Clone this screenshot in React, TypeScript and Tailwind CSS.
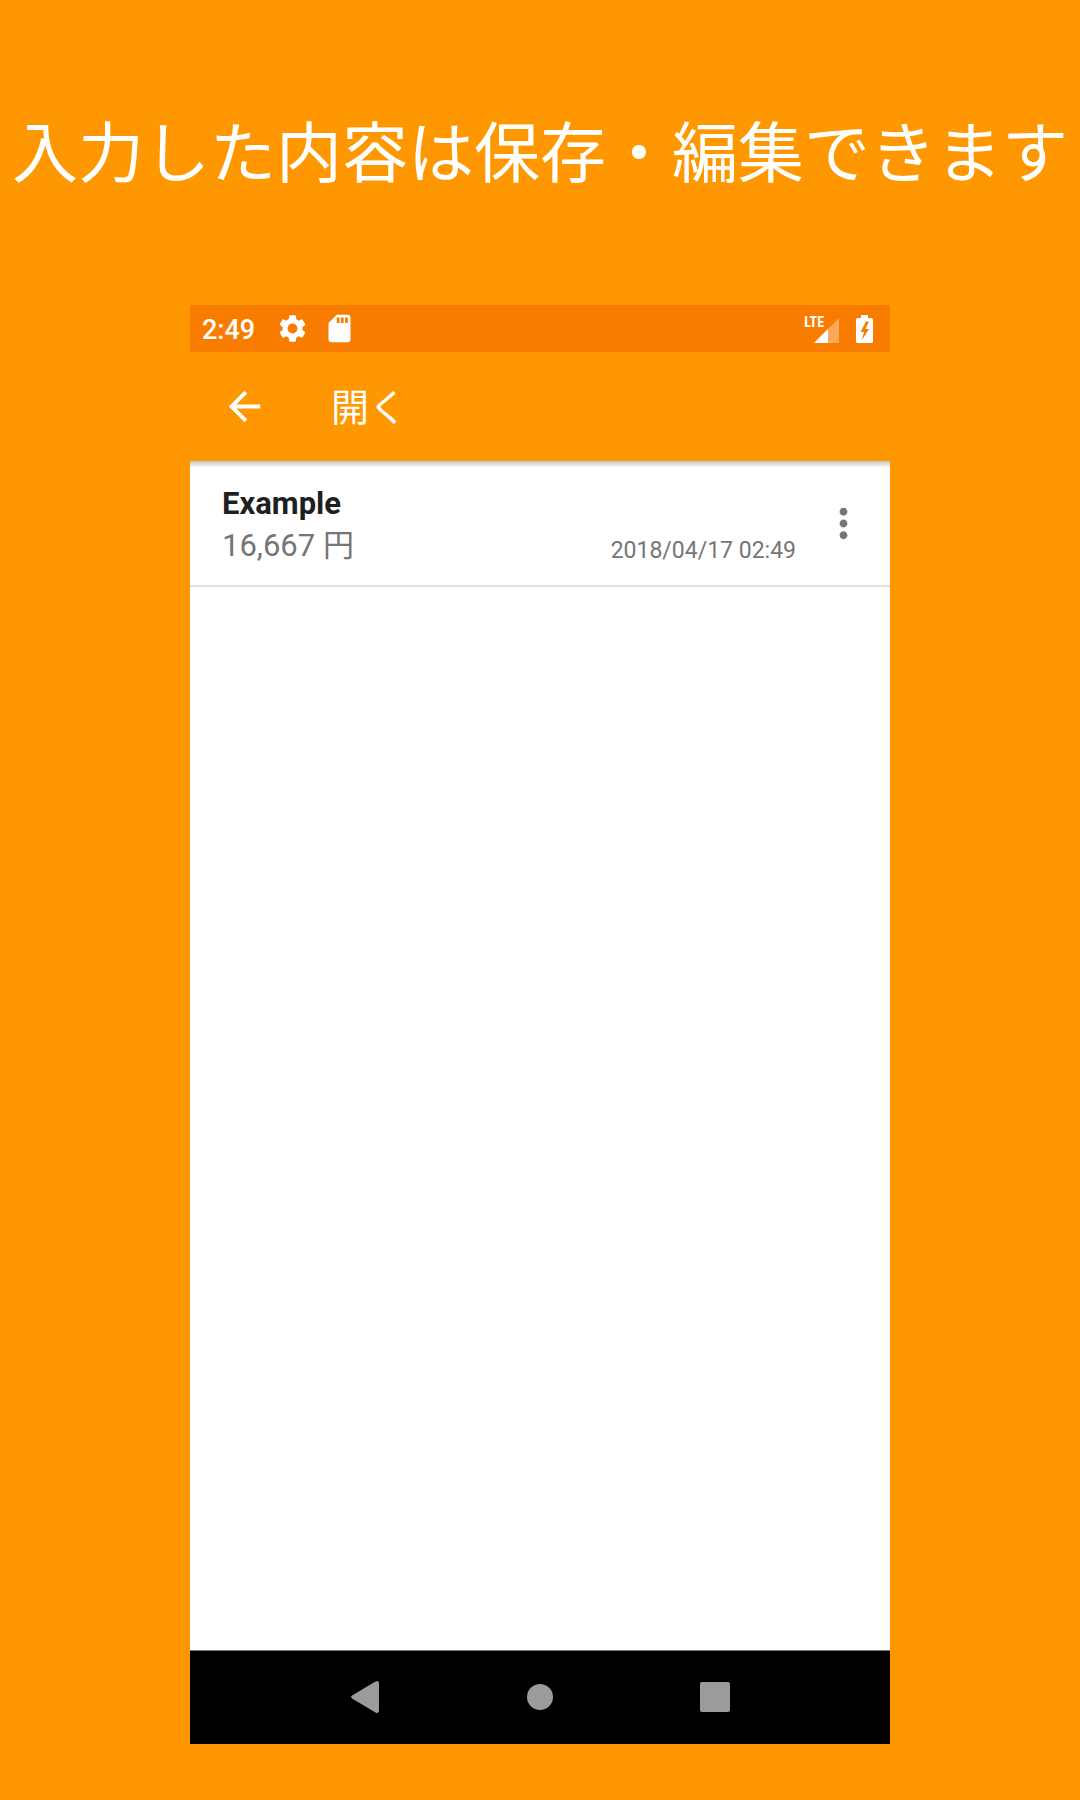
import React from "react";
import { MdArrowBack, MdMoreVert, MdSdCard, MdSettings } from "react-icons/md";

const items = [
  { id: 1, name: "Example", price: "16,667 円", date: "2018/04/17 02:49" },
];

const SignalIcon = () => (
  <div className="relative">
    <svg width="25" height="25" viewBox="0 0 25 25" className="mt-[3px]" aria-hidden="true">
      <path d="M25 0v25H0z" fill="#fff" fillOpacity="0.35" />
      <path d="M14 11v14H0z" fill="#fff" />
    </svg>
    <span className="absolute -top-px right-[15px] font-['Roboto_Condensed','Roboto',sans-serif] text-[14px] leading-4 font-bold">
      LTE
    </span>
  </div>
);

const BatteryIcon = () => (
  <svg width="17" height="28" viewBox="0 0 17 28" aria-label="Battery">
    <path
      d="M5 0h7v3h3.500q1.500 0 1.500 1.500v22q0 1.500-1.500 1.500h-14Q0 28 0 26.500v-22Q0 3 1.500 3H5zM10 6.500 4.500 17h3.500L6 25 13 14H9.500L13 6.500z"
      fill="#fff"
      fillRule="evenodd"
    />
  </svg>
);

const StatusBar = () => (
  <div className="flex h-[47px] items-center justify-between bg-[#f77c00] pr-[17px] pl-3 text-white">
    <div className="flex items-center gap-[14px]">
      <span className="mr-[7px] pt-0.5 text-[27px] leading-8 font-medium">2:49</span>
      <MdSettings size={33} />
      <MdSdCard size={33} />
    </div>
    <div className="flex items-center gap-[17px]">
      <SignalIcon />
      <BatteryIcon />
    </div>
  </div>
);

const AppBar = () => (
  <header className="flex h-[109px] items-center bg-[#ff9800] pl-[31px] text-white">
    <button type="button" aria-label="戻る">
      <MdArrowBack size={47} />
    </button>
    <h2 className="ml-[63px] pt-0.5 text-[38px] leading-[48px]">開く</h2>
  </header>
);

const SavedList = () => (
  <ul className="flex-1 bg-white bg-linear-to-b from-[#c4c4c4] to-white to-[7px]">
    {items.map((item) => (
      <li
        key={item.id}
        className="flex h-[126px] items-center border-b-2 border-[#e1e1e3] pr-[23px] pl-8"
      >
        <div className="flex-1 pt-1">
          <p className="text-[31px] leading-[42px] font-bold text-[#1f1f21]">{item.name}</p>
          <div className="flex items-end justify-between text-[#757575]">
            <p className="text-[31px] leading-[42px]">{item.price}</p>
            <time className="text-[23px] leading-8">{item.date}</time>
          </div>
        </div>
        <button type="button" aria-label="メニュー" className="ml-6 text-[#757575]">
          <MdMoreVert size={47} />
        </button>
      </li>
    ))}
  </ul>
);

const NavigationBar = () => (
  <nav className="flex h-[94px] justify-center border-t border-[#777777] bg-black pb-0.5 text-[#9b9b9d]">
    <button type="button" aria-label="Back" className="flex w-1/4 items-center justify-center">
      <svg width="28" height="32" viewBox="0 0 28 32" fill="currentColor">
        <path d="M1 14.500 24.500 0.600Q28 -1 28 2.500v27q0 3.500-3.500 1.900L1 17.500Q-0.800 16 1 14.500z" />
      </svg>
    </button>
    <button type="button" aria-label="Home" className="flex w-1/4 items-center justify-center">
      <span className="size-[26px] rounded-full bg-current" />
    </button>
    <button type="button" aria-label="Recent" className="flex w-1/4 items-center justify-center">
      <span className="size-[30px] rounded-xs bg-current" />
    </button>
  </nav>
);

const App = () => {
  return (
    <div
      lang="ja"
      className="flex min-h-screen flex-col items-center bg-[#ff9800] pb-14 font-['Roboto','Noto_Sans_CJK_JP',sans-serif]"
    >
      <h1 className="flex h-[305px] items-center pt-1 text-center text-[66px] leading-[96px] text-white">
        入力した内容は保存・編集できます
      </h1>
      <main className="flex w-full max-w-[700px] flex-1 flex-col">
        <StatusBar />
        <AppBar />
        <SavedList />
        <NavigationBar />
      </main>
    </div>
  );
};

export default App;
